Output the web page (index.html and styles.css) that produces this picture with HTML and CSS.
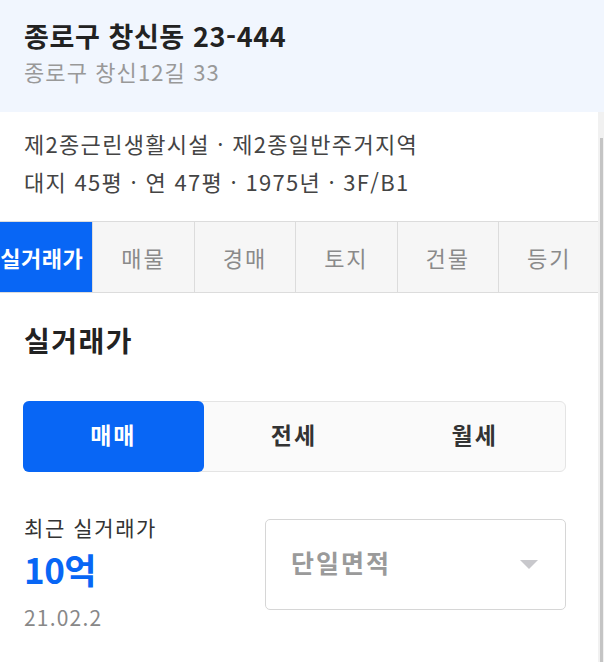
FILE: index.html
```html
<!DOCTYPE html>
<html lang="ko">
<head>
    <meta charset="UTF-8">
    <meta name="viewport" content="width=device-width, initial-scale=1.0">
    <title>종로구 창신동 23-444</title>
    <link rel="stylesheet" href="styles.css">
</head>
<body>
  <div class="header">
    <p class="title">종로구 창신동 23-444</p>
    <p class="subtitle">종로구 창신12길 33</p>
  </div>
  <div class="content">
    <div class="main">
      <div class="info">
        <p>제2종근린생활시설 · 제2종일반주거지역</p>
        <p>대지 45평 · 연 47평 · 1975년 · 3F/B1</p>
      </div>
      <div class="tabs">
        <div class="tabs-inner">
          <div class="tab active">실거래가</div>
          <div class="tab">매물</div>
          <div class="tab">경매</div>
          <div class="tab">토지</div>
          <div class="tab">건물</div>
          <div class="tab">등기</div>
        </div>
      </div>
      <div class="section">
        <h2 class="section-title">실거래가</h2>
        <div class="segment">
          <div class="seg active">매매</div>
          <div class="seg">전세</div>
          <div class="seg">월세</div>
        </div>
        <div class="recent">
          <div class="recent-left">
            <p class="recent-label">최근 실거래가</p>
            <p class="recent-price">10억</p>
            <p class="recent-date">21.02.2</p>
          </div>
          <div class="select">
            <span>단일면적</span>
            <i class="caret"></i>
          </div>
        </div>
      </div>
    </div>
    <div class="scrollbar"><div class="thumb"></div></div>
  </div>
</body>
</html>
```

FILE: styles.css
```css
* {
  box-sizing: border-box;
}
body {
  margin: 0;
  font-family: "Noto Sans CJK KR", "Noto Sans", sans-serif;
  color: #333;
  background: #fff;
  overflow: hidden;
}
p {
  margin: 0;
}

.header {
  background-color: #f1f6fe;
  height: 112px;
  padding: 19px 24px 0;
}
.title {
  font-size: 27px;
  font-weight: 700;
  line-height: 34px;
  color: #222;
  letter-spacing: 0.6px;
}
.subtitle {
  font-size: 22px;
  line-height: 30px;
  color: #999;
  margin-top: 3px;
  letter-spacing: 1.1px;
}

.content {
  display: flex;
  height: 550px;
}
.main {
  width: 598px;
}
.scrollbar {
  width: 6px;
  background: #f1f1f1;
  padding-top: 26px;
  padding-left: 2px;
}
.thumb {
  width: 3px;
  height: 524px;
  background: #c4c4c4;
}

.info {
  padding: 12px 24px 0;
  height: 109px;
}
.info p {
  font-size: 22px;
  line-height: 38px;
  color: #444;
  letter-spacing: 1.3px;
}

.tabs {
  height: 72px;
  border-top: 1px solid #dcdcdc;
  border-bottom: 1px solid #dcdcdc;
  overflow: hidden;
  background: #f6f6f6;
}
.tabs-inner {
  display: flex;
  height: 100%;
  margin-left: -9px;
}
.tab {
  width: 101.4px;
  flex: none;
  display: flex;
  align-items: center;
  justify-content: center;
  font-size: 22px;
  color: #8a8a8a;
  letter-spacing: 2px;
  border-left: 1px solid #dcdcdc;
}
.tab.active {
  background: #0866f5;
  color: #fff;
  font-weight: 700;
  letter-spacing: 0.5px;
  border-left: none;
}

.section {
  padding: 28px 32px 0 24px;
}
.section-title {
  margin: 0;
  font-size: 28px;
  font-weight: 700;
  line-height: 38px;
  color: #222;
  letter-spacing: 1.5px;
}

.segment {
  display: flex;
  margin-top: 42px;
  height: 71px;
  border: 1px solid #e4e4e4;
  border-radius: 6px;
  background: #fafafa;
  margin-left: -1px;
}
.seg {
  flex: 1;
  display: flex;
  align-items: center;
  justify-content: center;
  padding-bottom: 6px;
  font-size: 23px;
  font-weight: 700;
  color: #333;
  letter-spacing: 2px;
}
.seg.active {
  background: #0866f5;
  color: #fff;
  border-radius: 6px;
  margin: -1px 0 -1px -1px;
}

.recent {
  display: flex;
  align-items: flex-start;
  margin-top: 40px;
}
.recent-left {
  width: 241px;
  flex: none;
}
.recent-label {
  font-size: 21px;
  line-height: 30px;
  color: #333;
  letter-spacing: 1.6px;
}
.recent-price {
  font-size: 35px;
  font-weight: 700;
  line-height: 46px;
  color: #0866f5;
  margin-top: 4px;
  letter-spacing: -0.5px;
}
.recent-date {
  font-size: 21px;
  line-height: 30px;
  color: #888;
  margin-top: 10px;
  letter-spacing: 1.2px;
}
.select {
  flex: 1;
  height: 91px;
  margin-top: 7px;
  border: 1px solid #d6d6d6;
  border-radius: 5px;
  display: flex;
  align-items: center;
  justify-content: space-between;
  padding: 0 27px 0 25px;
}
.select span {
  font-size: 25px;
  font-weight: 700;
  color: #9a9a9a;
  letter-spacing: 2px;
  margin-top: -6px;
}
.caret {
  width: 0;
  height: 0;
  border-left: 9px solid transparent;
  border-right: 9px solid transparent;
  border-top: 9px solid #c8c8cc;
}
```
